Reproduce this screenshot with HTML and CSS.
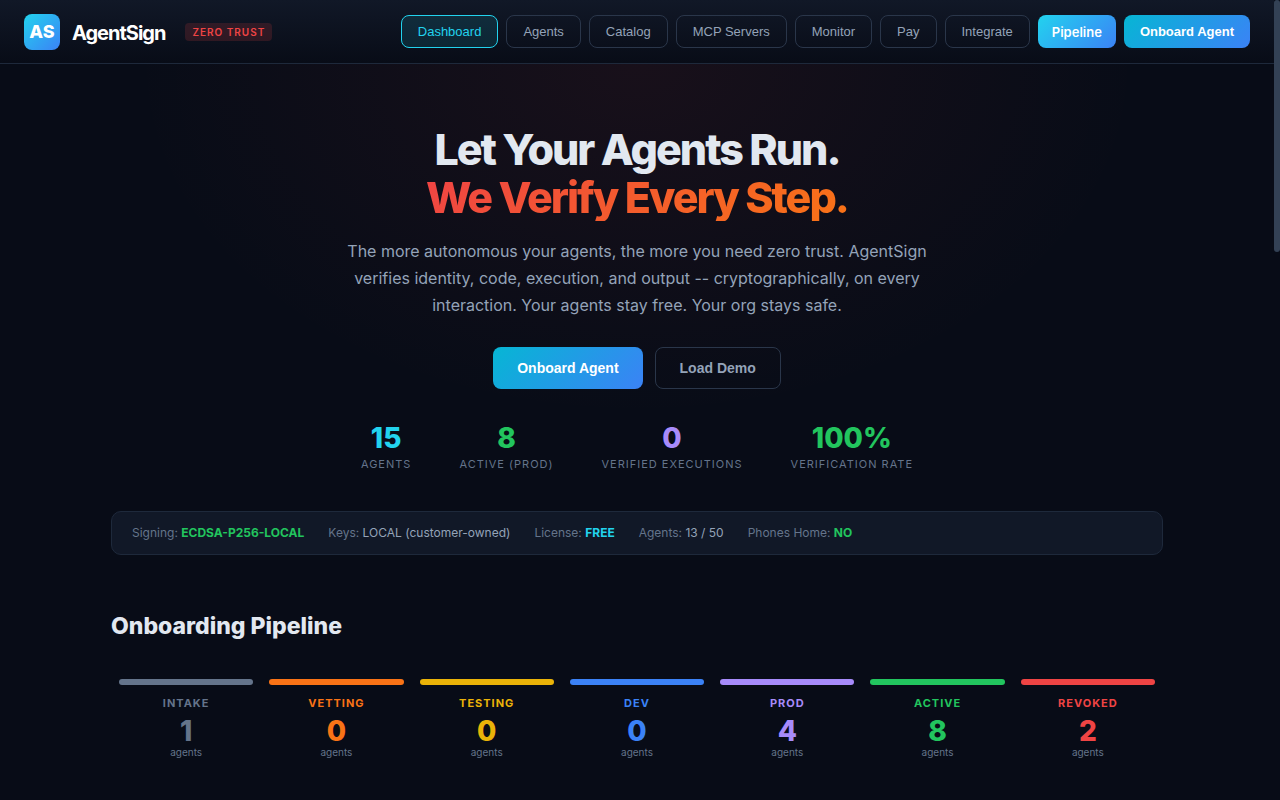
FILE: index.html
```html
<!DOCTYPE html>
<html lang="en">
<head>
<meta charset="utf-8">
<meta name="viewport" content="width=device-width, initial-scale=1">
<title>AgentSign</title>
<link rel="stylesheet" href="styles.css">
</head>
<body>
<header class="header">
  <div class="brand">
    <span class="logo">AS</span>
    <span class="brand-name">AgentSign</span>
    <span class="badge">ZERO TRUST</span>
  </div>
  <nav class="nav">
    <button class="nav-btn active" type="button">Dashboard</button>
    <button class="nav-btn" type="button">Agents</button>
    <button class="nav-btn" type="button">Catalog</button>
    <button class="nav-btn" type="button">MCP Servers</button>
    <button class="nav-btn" type="button">Monitor</button>
    <button class="nav-btn" type="button">Pay</button>
    <button class="nav-btn" type="button">Integrate</button>
    <a class="nav-link" href="#pipeline">Pipeline</a>
    <button class="nav-btn nav-primary" type="button">Onboard Agent</button>
  </nav>
</header>
<main>
  <section class="hero">
    <h1 class="hero-title">Let Your Agents Run.<br><span class="hero-accent">We Verify Every Step.</span></h1>
    <p class="hero-text">The more autonomous your agents, the more you need zero trust. AgentSign verifies identity, code, execution, and output -- cryptographically, on every interaction. Your agents stay free. Your org stays safe.</p>
    <div class="actions">
      <button class="btn btn-primary" type="button">Onboard Agent</button>
      <button class="btn btn-outline" type="button">Load Demo</button>
    </div>
    <div class="stats">
      <div class="stat"><div class="stat-value cyan">15</div><div class="stat-label">AGENTS</div></div>
      <div class="stat"><div class="stat-value green">8</div><div class="stat-label">ACTIVE (PROD)</div></div>
      <div class="stat"><div class="stat-value purple">0</div><div class="stat-label">VERIFIED EXECUTIONS</div></div>
      <div class="stat"><div class="stat-value green">100%</div><div class="stat-label">VERIFICATION RATE</div></div>
    </div>
  </section>
  <div class="container">
    <div class="status">
      <span>Signing: <strong class="green">ECDSA-P256-LOCAL</strong></span>
      <span>Keys: <span class="light">LOCAL (customer-owned)</span></span>
      <span>License: <strong class="cyan">FREE</strong></span>
      <span>Agents: <span class="light">13 / 50</span></span>
      <span>Phones Home: <strong class="green">NO</strong></span>
    </div>
    <section id="pipeline">
      <h2 class="section-title">Onboarding Pipeline</h2>
      <div class="pipeline">
        <div class="stage slate"><div class="bar"></div><div class="stage-name">INTAKE</div><div class="stage-count">1</div><div class="stage-unit">agents</div></div>
        <div class="stage orange"><div class="bar"></div><div class="stage-name">VETTING</div><div class="stage-count">0</div><div class="stage-unit">agents</div></div>
        <div class="stage yellow"><div class="bar"></div><div class="stage-name">TESTING</div><div class="stage-count">0</div><div class="stage-unit">agents</div></div>
        <div class="stage blue"><div class="bar"></div><div class="stage-name">DEV</div><div class="stage-count">0</div><div class="stage-unit">agents</div></div>
        <div class="stage purple"><div class="bar"></div><div class="stage-name">PROD</div><div class="stage-count">4</div><div class="stage-unit">agents</div></div>
        <div class="stage green"><div class="bar"></div><div class="stage-name">ACTIVE</div><div class="stage-count">8</div><div class="stage-unit">agents</div></div>
        <div class="stage red"><div class="bar"></div><div class="stage-name">REVOKED</div><div class="stage-count">2</div><div class="stage-unit">agents</div></div>
      </div>
    </section>
  </div>
</main>
<div class="scroll-track" aria-hidden="true"><div class="scroll-thumb"></div></div>
</body>
</html>
```
FILE: styles.css
```css
* { box-sizing: border-box; margin: 0; padding: 0; }
body {
  padding: 0 6px 32px 0;
  background: #080c17;
  color: #e2e8f0;
  font-family: Inter, "Liberation Sans", sans-serif;
  line-height: 1.6;
}
.header {
  display: flex;
  align-items: center;
  justify-content: space-between;
  min-height: 64px;
  padding: 0 24px;
  background: linear-gradient(180deg, #111827, #080c17);
  border-bottom: 1px solid #1e293b;
}
.brand { display: flex; align-items: center; gap: 12px; }
.logo {
  display: grid;
  place-items: center;
  width: 36px;
  height: 36px;
  padding-top: 2px;
  border-radius: 8px;
  background: linear-gradient(135deg, #22d3ee, #3b82f6);
  color: #fff;
  font-size: 18px;
  font-weight: 800;
}
.brand-name { padding-top: 2px; color: #fff; font-size: 20px; font-weight: 700; letter-spacing: -1px; }
.badge {
  margin-left: 8px;
  padding: 2px 7px;
  border-radius: 4px;
  background: rgba(239, 68, 68, 0.16);
  color: #ef4444;
  font-size: 10px;
  line-height: 14px;
  font-weight: 600;
  letter-spacing: 1px;
}
.nav { display: flex; gap: 8px; }
.nav-btn {
  padding: 8px 16px;
  border: 1px solid #2a364a;
  border-radius: 8px;
  background: transparent;
  color: #94a3b8;
  font: 13px/15px "Liberation Sans", Arial, sans-serif;
  cursor: pointer;
}
.nav-btn.active { border-color: #22d3ee; background: rgba(34, 211, 238, 0.12); color: #22d3ee; }
.nav-link {
  padding: 9px 14px 8px;
  border-radius: 8px;
  background: linear-gradient(135deg, #22d3ee, #3b82f6);
  color: #fff;
  font-size: 13px;
  line-height: 16px;
  font-weight: 600;
  text-decoration: none;
}
.nav-primary { border: 0; background: linear-gradient(135deg, #06b6d4, #3b82f6); color: #fff; font-weight: 700; }
.hero {
  padding: 61px 24px 38px;
  text-align: center;
  background: radial-gradient(ellipse at 50% 0%, rgba(239, 68, 68, 0.07) 0%, transparent 56%);
}
.hero-title {
  margin-bottom: 17px;
  font-size: 43px;
  line-height: 48px;
  font-weight: 800;
  letter-spacing: -2px;
}
.hero-accent {
  display: inline-block;
  background: linear-gradient(135deg, #ef4444, #f97316);
  -webkit-background-clip: text;
  background-clip: text;
  color: transparent;
}
.hero-text { max-width: 600px; margin: 0 auto 28px; color: #94a3b8; font-size: 16px; line-height: 27px; }
.actions { display: flex; justify-content: center; gap: 12px; margin-bottom: 32px; }
.btn {
  padding: 12px 24px;
  border-radius: 8px;
  font: 700 14px/16px "Liberation Sans", Arial, sans-serif;
  cursor: pointer;
}
.btn-primary { border: 0; background: linear-gradient(135deg, #06b6d4, #3b82f6); color: #fff; }
.btn-outline { border: 1px solid #2a364a; background: transparent; color: #94a3b8; }
.stats { display: flex; justify-content: center; flex-wrap: wrap; gap: 48px; }
.stat-value { font-size: 28px; line-height: 34px; font-weight: 800; }
.stat-label { color: #64748b; font-size: 11px; line-height: 18px; letter-spacing: 1px; }
.container { max-width: 1100px; margin: 0 auto; padding: 0 24px; }
.status {
  display: flex;
  flex-wrap: wrap;
  gap: 24px;
  padding: 11px 20px;
  border: 1px solid #1e293b;
  border-radius: 10px;
  background: #111827;
  color: #64748b;
  font-size: 12px;
  line-height: 20px;
}
.section-title { padding: 52px 0 34px; font-size: 23px; line-height: 38px; font-weight: 800; }
.pipeline { display: grid; grid-template-columns: repeat(7, 1fr); }
.stage { padding: 0 8px; text-align: center; }
.bar { height: 6px; margin-bottom: 9px; border-radius: 3px; background: currentColor; }
.stage-name { font-size: 11px; line-height: 18px; font-weight: 700; letter-spacing: 1px; }
.stage-count { margin-top: 5px; font-size: 28px; line-height: 28px; font-weight: 800; }
.stage-unit { color: #64748b; font-size: 10px; line-height: 14px; }
.light { color: #94a3b8; }
.cyan { color: #22d3ee; }
.green { color: #22c55e; }
.purple { color: #a78bfa; }
.slate { color: #64748b; }
.orange { color: #f97316; }
.yellow { color: #eab308; }
.blue { color: #3b82f6; }
.red { color: #ef4444; }
.scroll-track { position: fixed; top: 0; right: 0; bottom: 0; width: 6px; background: #080c17; }
.scroll-thumb { height: 252px; border-radius: 3px; background: #334155; }
```
